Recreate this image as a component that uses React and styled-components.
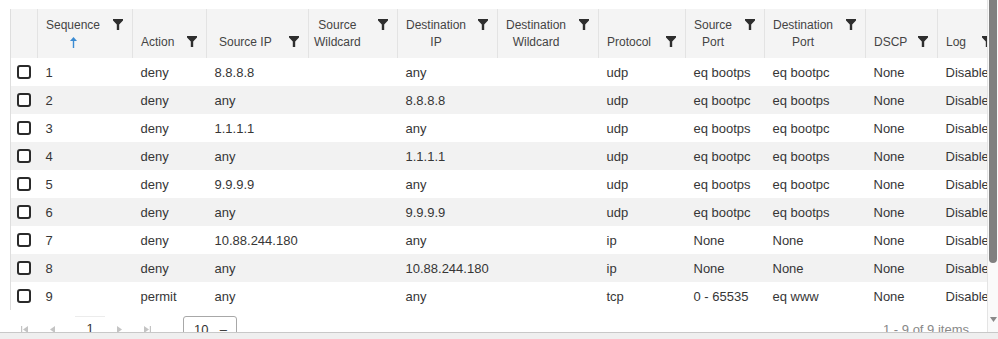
import React from 'react';
import styled, { createGlobalStyle } from 'styled-components';

const GlobalStyle = createGlobalStyle`
  html, body {
    margin: 0;
    padding: 0;
    background: #fff;
    overflow: hidden;
  }
  body {
    font-family: 'Liberation Sans', Arial, sans-serif;
    color: #333;
  }
`;

const Page = styled.div`
  width: 998px;
  height: 339px;
  display: flex;
  flex-direction: column;
`;

const Viewport = styled.div`
  height: 332px;
  display: flex;
  overflow: hidden;
`;

const Content = styled.div`
  flex: 1;
  min-width: 0;
  overflow: hidden;
  padding: 9px 0 0 10px;
`;

const Scrollbar = styled.div`
  width: 10px;
  flex-shrink: 0;
  border-left: 1px solid #e4e4e4;
  background: #fafafa;
  display: flex;
  flex-direction: column;
  justify-content: space-between;
  align-items: center;
  padding-bottom: 10px;
`;

const Thumb = styled.div`
  width: 8px;
  height: 263px;
  background: #808080;
  border-radius: 0 0 4px 4px;
`;

const Footer = styled.div`
  flex: 1;
  background: #efefef;
  border-top: 1px solid #c8c8c8;
`;

const Table = styled.table`
  width: 991px;
  min-width: 991px;
  table-layout: fixed;
  border-collapse: collapse;
  border-left: 1px solid #dedede;
`;

const HeadRow = styled.tr`
  height: 49px;
  background: #f4f4f4;
`;

const Th = styled.th`
  vertical-align: bottom;
  padding: 0 9px 7px ${(p) => p.$pl}px;
  border-right: 1px solid #e3e3e3;
  font-size: 12px;
  font-weight: normal;
  color: #444;
  text-align: left;
`;

const HeadInner = styled.div`
  display: flex;
  align-items: flex-start;
  justify-content: space-between;
`;

const Label = styled.div`
  display: inline-flex;
  flex-direction: column;
  align-items: center;
  text-align: center;
  line-height: 17px;
  white-space: nowrap;
`;

const SortSlot = styled.span`
  height: 17px;
  display: flex;
  align-items: center;
`;

const Row = styled.tr`
  height: 28px;
  background: ${(p) => (p.$alt ? '#f2f2f2' : '#fff')};
`;

const Td = styled.td`
  padding: 0 8px;
  font-size: 13px;
  color: #363636;
  white-space: nowrap;
`;

const CheckCell = styled.td`
  padding: 0 0 0 6px;
`;

const Checkbox = styled.span`
  display: block;
  width: 14px;
  height: 14px;
  box-sizing: border-box;
  border: 2px solid #2a2a2a;
  border-radius: 3px;
  background: #fff;
`;

const Pager = styled.div`
  display: flex;
  align-items: flex-start;
  padding: 6px 18px 0 0;
  height: 30px;
`;

const PagerBtn = styled.span`
  width: 28px;
  height: 22px;
  display: flex;
  align-items: center;
  justify-content: center;
  margin-top: 2px;
`;

const PageNum = styled.span`
  width: 30px;
  height: 24px;
  box-sizing: border-box;
  border-top: 1px solid #ececec;
  display: flex;
  align-items: center;
  justify-content: center;
  font-size: 13px;
  color: #333;
  margin-left: 9px;
`;

const SizeSelect = styled.span`
  width: 54px;
  height: 26px;
  box-sizing: border-box;
  border: 1px solid #a8a8a8;
  border-radius: 3px;
  display: flex;
  align-items: center;
  justify-content: space-between;
  padding: 0 9px 0 10px;
  font-size: 13px;
  margin-left: 22px;
`;

const Items = styled.span`
  margin-left: auto;
  font-size: 13px;
  color: #888;
  padding-top: 6px;
`;

const FilterIcon = () => (
  <svg width="10" height="11" viewBox="0 0 10 11" style={{ flexShrink: 0, marginTop: 2 }}>
    <path d="M0 0H10V1.6L6.2 5.4V11H3.8V5.4L0 1.6Z" fill="#2e2e2e" />
  </svg>
);

const SortUp = () => (
  <svg width="7" height="11" viewBox="0 0 7 11">
    <path d="M3.5 0L7 4H4.2V11H2.8V4H0Z" fill="#3b8bd2" />
  </svg>
);

const PagerIcon = ({ dir, bar }) => (
  <svg width="7" height="7" viewBox="0 0 7 7">
    {dir === 'left' ? (
      <>
        {bar && <rect x="0" y="0" width="1.2" height="7" fill="#c4c4c4" />}
        <path d={bar ? 'M7 0V7L2 3.5Z' : 'M6 0V7L1 3.5Z'} fill="#c4c4c4" />
      </>
    ) : (
      <>
        <path d={bar ? 'M0 0V7L5 3.5Z' : 'M1 0V7L6 3.5Z'} fill="#c4c4c4" />
        {bar && <rect x="5.8" y="0" width="1.2" height="7" fill="#c4c4c4" />}
      </>
    )}
  </svg>
);

const columns = [
  { key: 'seq', lines: ['Sequence'], width: 95, sort: true },
  { key: 'action', lines: ['Action'], width: 74 },
  { key: 'srcIp', lines: ['Source IP'], width: 102, pl: 12 },
  { key: 'srcWild', lines: ['Source', 'Wildcard'], width: 89, pl: 5 },
  { key: 'dstIp', lines: ['Destination', 'IP'], width: 100 },
  { key: 'dstWild', lines: ['Destination', 'Wildcard'], width: 101 },
  { key: 'proto', lines: ['Protocol'], width: 87 },
  { key: 'srcPort', lines: ['Source', 'Port'], width: 79 },
  { key: 'dstPort', lines: ['Destination', 'Port'], width: 101 },
  { key: 'dscp', lines: ['DSCP'], width: 72 },
  { key: 'log', lines: ['Log'], width: 64 },
];

const rows = [
  ['1', 'deny', '8.8.8.8', '', 'any', '', 'udp', 'eq bootps', 'eq bootpc'],
  ['2', 'deny', 'any', '', '8.8.8.8', '', 'udp', 'eq bootpc', 'eq bootps'],
  ['3', 'deny', '1.1.1.1', '', 'any', '', 'udp', 'eq bootps', 'eq bootpc'],
  ['4', 'deny', 'any', '', '1.1.1.1', '', 'udp', 'eq bootpc', 'eq bootps'],
  ['5', 'deny', '9.9.9.9', '', 'any', '', 'udp', 'eq bootps', 'eq bootpc'],
  ['6', 'deny', 'any', '', '9.9.9.9', '', 'udp', 'eq bootpc', 'eq bootps'],
  ['7', 'deny', '10.88.244.180', '', 'any', '', 'ip', 'None', 'None'],
  ['8', 'deny', 'any', '', '10.88.244.180', '', 'ip', 'None', 'None'],
  ['9', 'permit', 'any', '', 'any', '', 'tcp', '0 - 65535', 'eq www'],
];

const App = () => {
  return (
    <Page>
      <GlobalStyle />
      <Viewport>
        <Content>
          <Table>
            <colgroup>
              <col style={{ width: 27 }} />
              {columns.map((c) => (
                <col key={c.key} style={{ width: c.width }} />
              ))}
            </colgroup>
            <thead>
              <HeadRow>
                <Th $pl={0} />
                {columns.map((c) => (
                  <Th key={c.key} $pl={c.pl ?? 8}>
                    <HeadInner>
                      <Label>
                        {c.lines.map((l) => (
                          <span key={l}>{l}</span>
                        ))}
                        {c.sort && (
                          <SortSlot>
                            <SortUp />
                          </SortSlot>
                        )}
                      </Label>
                      <FilterIcon />
                    </HeadInner>
                  </Th>
                ))}
              </HeadRow>
            </thead>
            <tbody>
              {rows.map((r, i) => (
                <Row key={r[0]} $alt={i % 2 === 1}>
                  <CheckCell>
                    <Checkbox />
                  </CheckCell>
                  {r.map((v, j) => (
                    <Td key={j}>{v}</Td>
                  ))}
                  <Td>None</Td>
                  <Td>Disabled</Td>
                </Row>
              ))}
            </tbody>
          </Table>
          <Pager>
            <PagerBtn><PagerIcon dir="left" bar /></PagerBtn>
            <PagerBtn><PagerIcon dir="left" /></PagerBtn>
            <PageNum>1</PageNum>
            <PagerBtn><PagerIcon dir="right" /></PagerBtn>
            <PagerBtn><PagerIcon dir="right" bar /></PagerBtn>
            <SizeSelect>
              <span>10</span>
              <span>–</span>
            </SizeSelect>
            <Items>1 - 9 of 9 items</Items>
          </Pager>
        </Content>
        <Scrollbar>
          <Thumb />
          <svg width="7" height="5" viewBox="0 0 7 5">
            <path d="M0 0H7L3.5 5Z" fill="#8a8a8a" />
          </svg>
        </Scrollbar>
      </Viewport>
      <Footer />
    </Page>
  );
};

export default App;
